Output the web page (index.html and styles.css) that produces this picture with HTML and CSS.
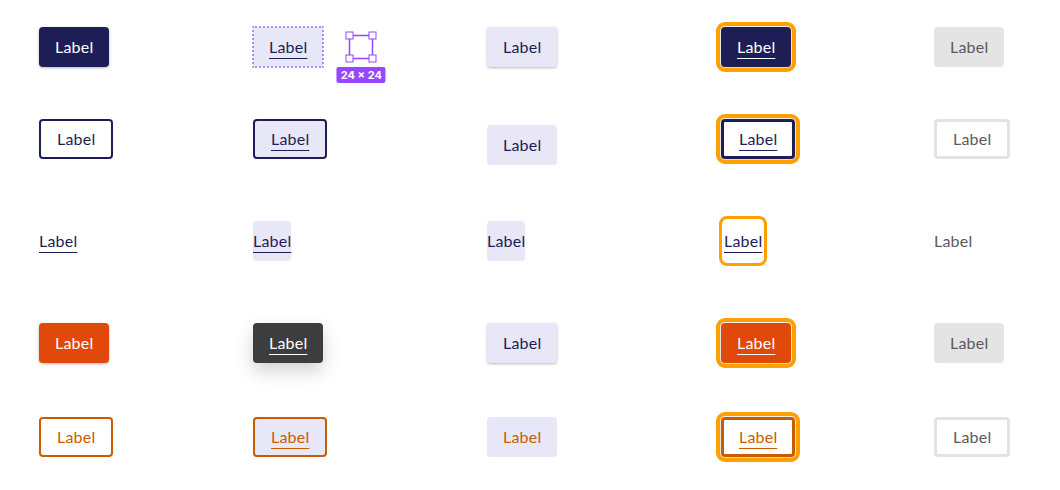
FILE: index.html
```html
<!DOCTYPE html>
<html lang="en">
<head>
  <meta charset="UTF-8">
  <meta name="viewport" content="width=device-width, initial-scale=1.0">
  <title>Button states</title>
  <link rel="stylesheet" href="styles.css">
</head>
<body>
  <div class="states">
    <!-- primary -->
    <div class="cell"><button class="btn primary raised">Label</button></div>
    <div class="cell">
      <button class="btn hover selected">Label</button>
      <div class="measure">
        <svg width="32" height="32" viewBox="0 0 32 32">
          <rect x="4.5" y="4.5" width="23" height="23" fill="none" stroke="#9747ff" stroke-width="1.5"/>
          <rect x="1" y="1" width="7" height="7" fill="#fff" stroke="#9747ff" stroke-width="1"/>
          <rect x="24" y="1" width="7" height="7" fill="#fff" stroke="#9747ff" stroke-width="1"/>
          <rect x="1" y="24" width="7" height="7" fill="#fff" stroke="#9747ff" stroke-width="1"/>
          <rect x="24" y="24" width="7" height="7" fill="#fff" stroke="#9747ff" stroke-width="1"/>
        </svg>
        <span class="size-badge">24 × 24</span>
      </div>
    </div>
    <div class="cell"><button class="btn active raised">Label</button></div>
    <div class="cell"><button class="btn primary focus">Label</button></div>
    <div class="cell"><button class="btn disabled">Label</button></div>

    <!-- outline -->
    <div class="cell"><button class="btn outline">Label</button></div>
    <div class="cell"><button class="btn outline hover">Label</button></div>
    <div class="cell"><button class="btn active pressed">Label</button></div>
    <div class="cell"><button class="btn outline focus thick">Label</button></div>
    <div class="cell"><button class="btn outline disabled">Label</button></div>

    <!-- text -->
    <div class="cell"><button class="btn text">Label</button></div>
    <div class="cell"><button class="btn text hover">Label</button></div>
    <div class="cell"><button class="btn text active">Label</button></div>
    <div class="cell"><button class="btn text focus shift">Label</button></div>
    <div class="cell"><button class="btn text disabled">Label</button></div>

    <!-- danger -->
    <div class="cell"><button class="btn danger raised">Label</button></div>
    <div class="cell"><button class="btn danger-hover">Label</button></div>
    <div class="cell"><button class="btn active raised">Label</button></div>
    <div class="cell"><button class="btn danger focus">Label</button></div>
    <div class="cell"><button class="btn disabled">Label</button></div>

    <!-- danger outline -->
    <div class="cell"><button class="btn danger-outline">Label</button></div>
    <div class="cell"><button class="btn danger-outline hover">Label</button></div>
    <div class="cell"><button class="btn active danger-text">Label</button></div>
    <div class="cell"><button class="btn danger-outline focus thick">Label</button></div>
    <div class="cell"><button class="btn outline disabled">Label</button></div>
  </div>
</body>
</html>
```

FILE: styles.css
```css
body {
  margin: 0;
  padding: 0;
  background: #ffffff;
  font-family: Lato, "Open Sans", sans-serif;
}

.states {
  display: grid;
  grid-template-columns: 214px 234px 234px 213px 1fr;
  grid-template-rows: 94px 90px 114px 90px 98px;
  padding-left: 39px;
}

.cell {
  display: flex;
  align-items: center;
  gap: 22px;
}

.btn {
  font-family: inherit;
  font-size: 16px;
  line-height: 20px;
  letter-spacing: 0.2px;
  padding: 10px 16px;
  border: none;
  border-radius: 4px;
  background: transparent;
  color: #1e1e56;
  cursor: pointer;
  text-underline-offset: 5px;
  text-decoration-thickness: 1px;
}

.primary {
  background: #1e1e56;
  color: #ffffff;
}

.raised {
  box-shadow: 0 1px 3px rgba(0, 0, 0, 0.28);
}

.outline {
  background: #ffffff;
  border: 2px solid #1e1e56;
  padding: 8px 16px;
}

.text {
  padding: 10px 0;
  text-decoration: underline;
}

.danger {
  background: #e0490a;
  color: #ffffff;
}

.danger-outline {
  background: #ffffff;
  border: 2px solid #c95c00;
  padding: 8px 16px;
  color: #c95c00;
}

.danger-text {
  color: #c95c00;
}

/* hover column */
.hover {
  background: #e7e7f8;
  text-decoration: underline;
}

.selected {
  outline: 2px dotted #b889ff;
  outline-offset: -1px;
  border-radius: 1px;
}

.danger-hover {
  background: #3d3d3d;
  color: #ffffff;
  text-decoration: underline;
  box-shadow: 0 8px 18px rgba(0, 0, 0, 0.18);
}

/* active column */
.active {
  background: #e7e7f8;
  text-decoration: none;
}

.pressed {
  margin-top: 12px;
}

/* focus column */
.focus {
  text-decoration: underline;
  outline: 4px solid #ffa000;
  outline-offset: 1px;
  box-shadow: 0 1px 4px rgba(0, 0, 0, 0.25);
}

.text.focus {
  background: #ffffff;
  box-shadow: none;
  border-radius: 3px;
  outline-width: 3px;
  outline-offset: 2px;
}

.thick {
  border-width: 3px;
  padding: 7px 15px;
}

.shift {
  margin-left: 3px;
}

/* disabled column */
.disabled {
  background: #e4e4e4;
  color: #5a5a5f;
  text-decoration: none;
}

.outline.disabled {
  background: #ffffff;
  border: 3px solid #e3e3e3;
  padding: 7px 16px;
}

.text.disabled {
  background: transparent;
}

/* size annotation */
.measure {
  position: relative;
  display: flex;
}

.size-badge {
  position: absolute;
  top: 36px;
  left: 50%;
  transform: translateX(-50%);
  white-space: nowrap;
  background: #9747ff;
  color: #ffffff;
  font-family: Inter, sans-serif;
  font-size: 11px;
  font-weight: 700;
  line-height: 16px;
  letter-spacing: 0;
  padding: 0 4px;
  border-radius: 2px;
}
```
